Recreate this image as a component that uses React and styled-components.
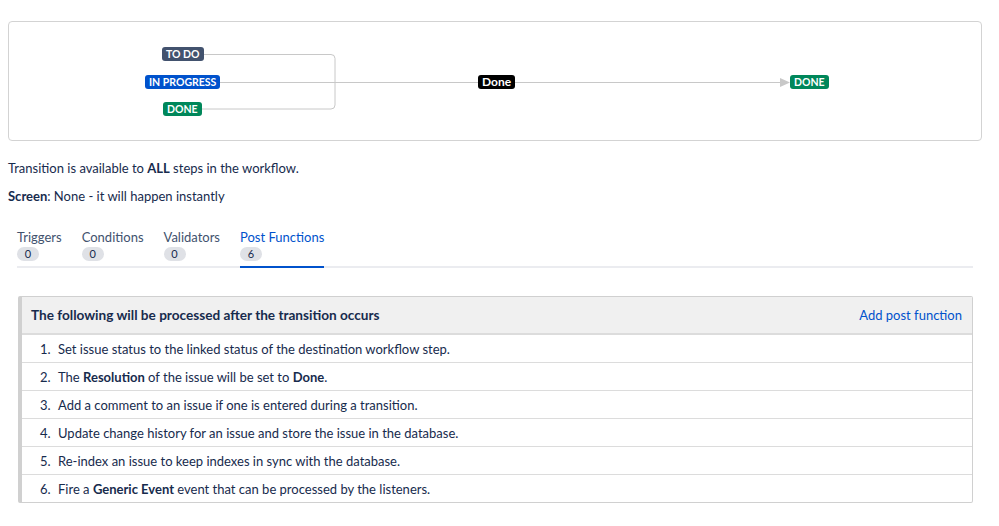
import React from "react";
import styled, { createGlobalStyle } from "styled-components";

const GlobalStyle = createGlobalStyle`
  body {
    margin: 0;
    background: #fff;
    font-family: "Lato", "Noto Sans", sans-serif;
    color: #172b4d;
    font-size: 13px;
  }
`;

const Page = styled.div`
  width: 974px;
  padding: 21px 0 0 8px;
`;

const DiagramCard = styled.div`
  position: relative;
  height: 118px;
  border: 1px solid #d3d3d3;
  border-radius: 4px;
`;

const Lines = styled.svg`
  position: absolute;
  inset: 0;
  width: 100%;
  height: 100%;
`;

const Status = styled.span`
  position: absolute;
  left: ${({ x }) => x}px;
  top: ${({ y }) => y}px;
  height: 14px;
  line-height: 14px;
  padding: 0 4px;
  border-radius: 3px;
  font-size: 10.5px;
  font-weight: 700;
  text-transform: uppercase;
  color: #fff;
  background: ${({ bg }) => bg};
  white-space: nowrap;
`;

const TransitionLabel = styled(Status)`
  text-transform: none;
  font-size: 12px;
  background: #000;
`;

const Info = styled.p`
  margin: 0;
  line-height: 18px;
  padding-top: ${({ top }) => top}px;
  b {
    font-weight: 700;
  }
`;

const Tabs = styled.div`
  display: flex;
  gap: 20px;
  margin: 24px 9px 0 9px;
  border-bottom: 2px solid #ebecf0;
`;

const Tab = styled.div`
  display: flex;
  flex-direction: column;
  align-items: flex-start;
  padding-bottom: 5px;
  margin-bottom: -2px;
  border-bottom: 2px solid ${({ active }) => (active ? "#0052cc" : "transparent")};
  color: ${({ active }) => (active ? "#0052cc" : "#42526e")};
  font-size: 13px;
  line-height: 17px;
`;

const Count = styled.span`
  margin-top: 1px;
  min-width: 22px;
  height: 14px;
  line-height: 14px;
  border-radius: 7px;
  background: #dfe1e6;
  color: #172b4d;
  font-size: 11px;
  text-align: center;
`;

const Panel = styled.div`
  margin: 28px 9px 0 10px;
  border: 1px solid #d0d0d0;
  border-left: 4px solid #d0d0d0;
  border-radius: 2px;
`;

const PanelHeader = styled.div`
  display: flex;
  justify-content: space-between;
  align-items: center;
  height: 36px;
  padding: 0 10px 0 9px;
  background: #f0f0f0;
  border-bottom: 2px solid #dcdcdc;
  h3 {
    margin: 0;
    font-size: 13.6px;
    font-weight: 700;
    color: #172b4d;
  }
  a {
    color: #0052cc;
    text-decoration: none;
    font-size: 13px;
  }
`;

const FunctionList = styled.ol`
  margin: 0;
  padding: 0;
  list-style: none;
`;

const FunctionRow = styled.li`
  display: flex;
  align-items: center;
  height: 27px;
  border-top: ${({ first }) => (first ? "none" : "1px solid #dcdcdc")};
  color: #172b4d;
  b {
    font-weight: 700;
  }
`;

const StepNumber = styled.span`
  width: 36px;
  flex: none;
  padding-left: 18px;
  box-sizing: border-box;
`;

const StepText = styled.span`
  white-space: nowrap;
`;

const steps = [
  <>Set issue status to the linked status of the destination workflow step.</>,
  <>The <b>Resolution</b> of the issue will be set to <b>Done</b>.</>,
  <>Add a comment to an issue if one is entered during a transition.</>,
  <>Update change history for an issue and store the issue in the database.</>,
  <>Re-index an issue to keep indexes in sync with the database.</>,
  <>Fire a <b>Generic Event</b> event that can be processed by the listeners.</>,
];

const tabs = [
  { label: "Triggers", count: 0 },
  { label: "Conditions", count: 0 },
  { label: "Validators", count: 0 },
  { label: "Post Functions", count: 6, active: true },
];

export default function App() {
  return (
    <Page>
      <GlobalStyle />
      <DiagramCard>
        <Lines>
          <g stroke="#c8c8c8" strokeWidth="1" fill="none">
            <path d="M193 32.5 H322 a4 4 0 0 1 4 4 V83 a4 4 0 0 1 -4 4 H193" />
            <path d="M210 60.5 H469" />
            <path d="M505 60.5 H772" />
          </g>
          <path d="M771 56 L781 60.5 L771 65 Z" fill="#c8c8c8" />
        </Lines>
        <Status x={153} y={25} bg="#42526e">To Do</Status>
        <Status x={136} y={53} bg="#0052cc">In Progress</Status>
        <Status x={154} y={80} bg="#00875a">Done</Status>
        <TransitionLabel x={469} y={53}>Done</TransitionLabel>
        <Status x={781} y={53} bg="#00875a">Done</Status>
      </DiagramCard>

      <Info top={18}>
        Transition is available to <b>ALL</b> steps in the workflow.
      </Info>
      <Info top={10}>
        <b>Screen</b>: None - it will happen instantly
      </Info>

      <Tabs>
        {tabs.map((t) => (
          <Tab key={t.label} active={t.active}>
            {t.label}
            <Count>{t.count}</Count>
          </Tab>
        ))}
      </Tabs>

      <Panel>
        <PanelHeader>
          <h3>The following will be processed after the transition occurs</h3>
          <a href="#">Add post function</a>
        </PanelHeader>
        <FunctionList>
          {steps.map((s, i) => (
            <FunctionRow key={i} first={i === 0}>
              <StepNumber>{i + 1}.</StepNumber>
              <StepText>{s}</StepText>
            </FunctionRow>
          ))}
        </FunctionList>
      </Panel>
    </Page>
  );
}
